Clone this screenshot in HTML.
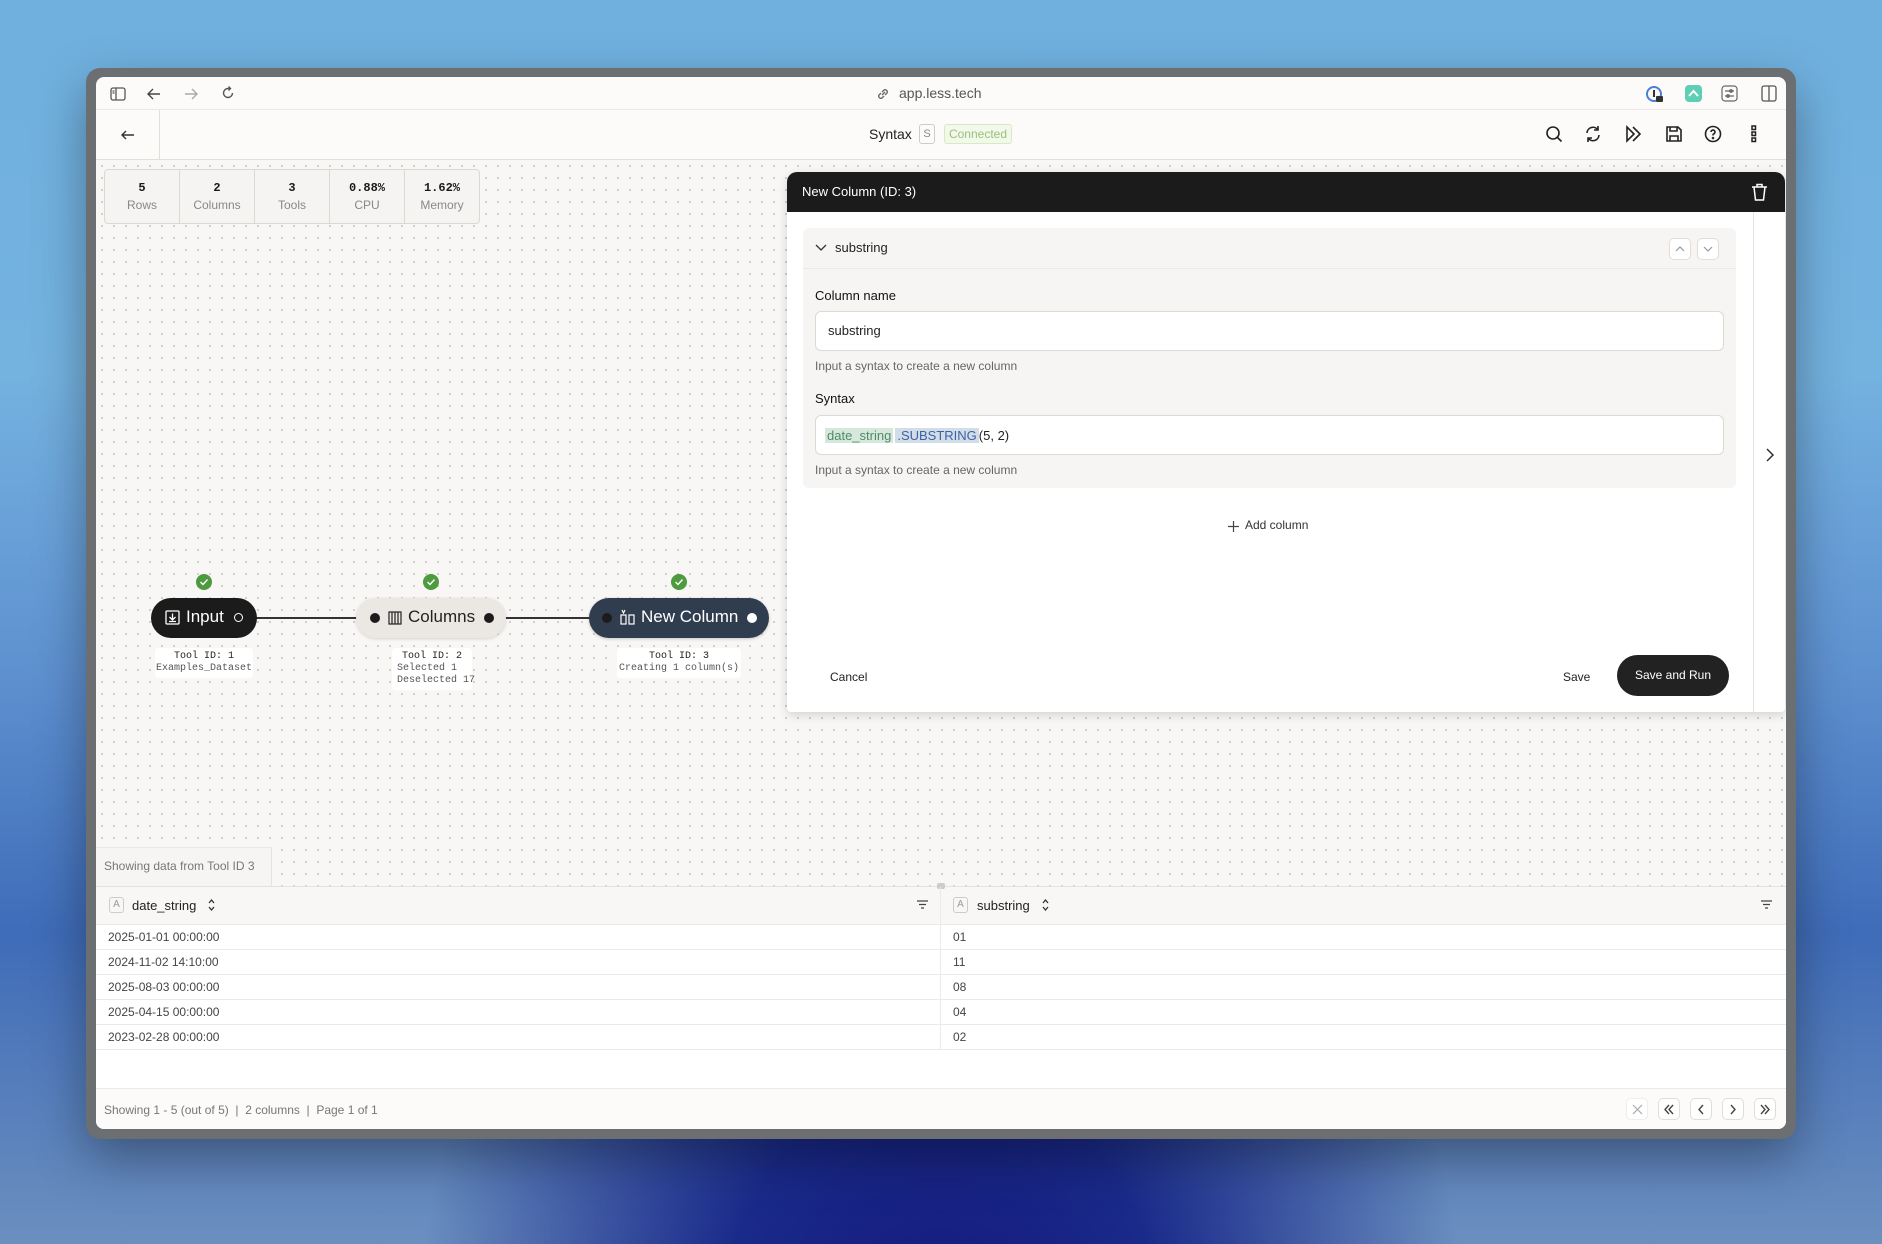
<!DOCTYPE html>
<html><head><meta charset="utf-8"><style>
*{box-sizing:border-box;margin:0;padding:0}
body{width:1882px;height:1244px;overflow:hidden;position:relative;font-family:"Liberation Sans",sans-serif;color:#1a1a1a;
background:radial-gradient(ellipse at 50% 115%,#12157a 0,#1a2a8a 18%,transparent 40%),linear-gradient(180deg,#6fb0df 0,#74b2e0 30%,#5d8fcf 55%,#3f6cb8 75%,#6b8fbf 100%);}
.abs{position:absolute}
.win{left:86px;top:68px;width:1710px;height:1071px;background:#6c6f72;border-radius:14px;box-shadow:0 20px 50px rgba(0,0,0,.35)}
.inner{left:96px;top:77px;width:1690px;height:1052px;background:#fcfbf9;border-radius:8px;overflow:hidden}
.t{position:absolute;white-space:nowrap}
.canvas{left:0;top:83px;width:1690px;height:726px;background-color:#f8f7f5;background-image:radial-gradient(#cfccc7 1px,transparent 1.2px);background-size:12px 12px}
svg{position:absolute}
.mono{font-family:"Liberation Mono",monospace}
.ibtn{position:absolute;width:22px;height:22px;border:1px solid #e2ddd6;border-radius:5px;background:#fff}
</style></head><body>
<div class="abs win"></div>
<div class="abs inner">
 <div class="abs" style="left:0;top:0;width:1690px;height:33px;border-bottom:1px solid #ebe8e4"></div>
 <svg style="left:14px;top:10px" width="16" height="14" viewBox="0 0 16 14" fill="none" stroke="#555" stroke-width="1.3"><rect x="1" y="1" width="14" height="12" rx="2"/><path d="M6 1v12M2.5 4h2M2.5 6h2"/></svg>
 <svg style="left:50px;top:10px" width="16" height="14" viewBox="0 0 16 14" fill="none" stroke="#444" stroke-width="1.4"><path d="M14 7H2M7 2L2 7l5 5"/></svg>
 <svg style="left:87px;top:10px" width="16" height="14" viewBox="0 0 16 14" fill="none" stroke="#aaa" stroke-width="1.4"><path d="M2 7h12M9 2l5 5-5 5"/></svg>
 <svg style="left:124px;top:8px" width="16" height="16" viewBox="0 0 16 16" fill="none" stroke="#555" stroke-width="1.4"><path d="M12.5 8A4.5 4.5 0 1 1 8 3.5h2M8.5 1.5l2 2-2 2"/></svg>
 <svg style="left:780px;top:10px" width="14" height="14" viewBox="0 0 14 14" fill="none" stroke="#666" stroke-width="1.3"><path d="M6 8l3-3M5 6l-2 2a2.2 2.2 0 0 0 3 3l2-2M9 8l2-2a2.2 2.2 0 0 0-3-3L6 5"/></svg>
 <div class="t" style="left:803px;top:8px;font-size:14px;color:#555">app.less.tech</div>
 <svg style="left:1550px;top:9px" width="18" height="18" viewBox="0 0 18 18"><circle cx="8" cy="8" r="7" fill="none" stroke="#4a7fd6" stroke-width="2"/><rect x="7" y="4" width="2" height="7" fill="#333"/><rect x="10" y="10" width="7" height="6" rx="1" fill="#333"/></svg>
 <div class="abs" style="left:1589px;top:8px;width:17px;height:17px;background:#5ecfb5;border-radius:4px"></div>
 <svg style="left:1592px;top:11px" width="11" height="10" viewBox="0 0 11 10" fill="none" stroke="#fff" stroke-width="2"><path d="M1 8l4.5-5L10 8"/></svg>
 <svg style="left:1625px;top:8px" width="17" height="17" viewBox="0 0 17 17" fill="none" stroke="#666" stroke-width="1.2"><rect x="1" y="1" width="15" height="15" rx="3"/><path d="M4 6h9M4 11h9"/><circle cx="10" cy="6" r="1.3"/><circle cx="7" cy="11" r="1.3"/></svg>
 <svg style="left:1665px;top:8px" width="16" height="17" viewBox="0 0 16 17" fill="none" stroke="#555" stroke-width="1.3"><rect x="1" y="1" width="14" height="15" rx="2"/><path d="M8 1v15"/></svg>
 <div class="abs" style="left:0;top:33px;width:1690px;height:50px;border-bottom:1px solid #e2ded8"></div>
 <div class="abs" style="left:63px;top:33px;width:1px;height:50px;background:#e2ded8"></div>
 <svg style="left:24px;top:52px" width="16" height="12" viewBox="0 0 16 12" fill="none" stroke="#333" stroke-width="1.4"><path d="M14 6H2M6 2L2 6l4 4"/></svg>
 <div class="t" style="left:773px;top:49px;font-size:14px;color:#222">Syntax</div>
 <div class="abs" style="left:823px;top:47px;width:16px;height:20px;border:1px solid #ccc;border-radius:3px;font-size:11px;color:#888;text-align:center;line-height:18px">S</div>
 <div class="abs" style="left:848px;top:47px;width:68px;height:20px;border:1px solid #d7ebc3;background:#f2f9ea;border-radius:3px;font-size:12px;color:#9ac07a;text-align:center;line-height:18px">Connected</div>
 <svg style="left:1449px;top:48px" width="18" height="18" viewBox="0 0 18 18" fill="none" stroke="#222" stroke-width="1.6"><circle cx="8" cy="8" r="6"/><path d="M12.5 12.5l4 4"/></svg>
 <svg style="left:1488px;top:48px" width="18" height="18" viewBox="0 0 18 18" fill="none" stroke="#222" stroke-width="1.6"><path d="M3 8a6 6 0 0 1 11-3M15 10a6 6 0 0 1-11 3M14 1v4h-4M4 17v-4h4"/></svg>
 <svg style="left:1529px;top:48px" width="18" height="18" viewBox="0 0 18 18" fill="none" stroke="#222" stroke-width="1.6"><path d="M2 2l7 7-7 7zM8 2l7 7-7 7"/></svg>
 <svg style="left:1569px;top:48px" width="18" height="18" viewBox="0 0 18 18" fill="none" stroke="#222" stroke-width="1.6"><path d="M2 2h11l3 3v11H2zM5 2v4h7V2M5 16v-5h8v5"/></svg>
 <svg style="left:1608px;top:48px" width="18" height="18" viewBox="0 0 18 18" fill="none" stroke="#222" stroke-width="1.6"><circle cx="9" cy="9" r="7.5"/><path d="M7 7a2 2 0 1 1 2.5 2c-.5.2-.5.8-.5 1.5"/><circle cx="9" cy="13" r=".5"/></svg>
 <svg style="left:1655px;top:48px" width="6" height="18" viewBox="0 0 6 18" fill="none" stroke="#222" stroke-width="1.5"><rect x="1" y="1" width="3.5" height="3.5"/><rect x="1" y="7" width="3.5" height="3.5"/><rect x="1" y="13" width="3.5" height="3.5"/></svg>
 <div class="abs canvas"></div>
 <div class="abs" style="left:8px;top:92px;width:376px;height:55px;border:1px solid #ddd8d1;border-radius:4px;background:#f6f4f2;display:flex">
  <div style="flex:1;text-align:center;border-right:1px solid #ddd8d1;padding-top:11px"><div class="mono" style="font-size:12px;font-weight:bold">5</div><div style="font-size:12px;color:#888;margin-top:3px">Rows</div></div>
  <div style="flex:1;text-align:center;border-right:1px solid #ddd8d1;padding-top:11px"><div class="mono" style="font-size:12px;font-weight:bold">2</div><div style="font-size:12px;color:#888;margin-top:3px">Columns</div></div>
  <div style="flex:1;text-align:center;border-right:1px solid #ddd8d1;padding-top:11px"><div class="mono" style="font-size:12px;font-weight:bold">3</div><div style="font-size:12px;color:#888;margin-top:3px">Tools</div></div>
  <div style="flex:1;text-align:center;border-right:1px solid #ddd8d1;padding-top:11px"><div class="mono" style="font-size:12px;font-weight:bold">0.88%</div><div style="font-size:12px;color:#888;margin-top:3px">CPU</div></div>
  <div style="flex:1;text-align:center;padding-top:11px"><div class="mono" style="font-size:12px;font-weight:bold">1.62%</div><div style="font-size:12px;color:#888;margin-top:3px">Memory</div></div>
 </div>
 <div class="abs" style="left:140px;top:540px;width:370px;height:2px;background:#333"></div>
 <svg style="left:100px;top:497px" width="16" height="16" viewBox="0 0 16 16"><circle cx="8" cy="8" r="8" fill="#4e9a3f"/><path d="M4.5 8l2.5 2.5 4.5-5" stroke="#fff" stroke-width="1.4" fill="none"/></svg>
 <svg style="left:327px;top:497px" width="16" height="16" viewBox="0 0 16 16"><circle cx="8" cy="8" r="8" fill="#4e9a3f"/><path d="M4.5 8l2.5 2.5 4.5-5" stroke="#fff" stroke-width="1.4" fill="none"/></svg>
 <svg style="left:575px;top:497px" width="16" height="16" viewBox="0 0 16 16"><circle cx="8" cy="8" r="8" fill="#4e9a3f"/><path d="M4.5 8l2.5 2.5 4.5-5" stroke="#fff" stroke-width="1.4" fill="none"/></svg>
 <div class="abs" style="left:55px;top:521px;width:106px;height:40px;background:#1b1b1b;border-radius:20px"></div>
 <svg style="left:69px;top:533px" width="15" height="15" viewBox="0 0 15 15" fill="none" stroke="#fff" stroke-width="1.3"><rect x="1" y="1" width="13" height="13" rx="1"/><path d="M7.5 3.5v6M4.5 7l3 3 3-3M4 11.5h7"/></svg>
 <div class="t" style="left:90px;top:530px;font-size:17px;color:#fff">Input</div>
 <div class="abs" style="left:138px;top:536px;width:9px;height:9px;border:1.3px solid #fff;border-radius:50%"></div>
 <div class="abs" style="left:260px;top:521px;width:150px;height:40px;background:#ebe8e3;border-radius:20px;box-shadow:0 1px 3px rgba(0,0,0,.15)"></div>
 <div class="abs" style="left:274px;top:536px;width:10px;height:10px;background:#1b1b1b;border-radius:50%"></div>
 <svg style="left:292px;top:534px" width="14" height="14" viewBox="0 0 14 14" fill="none" stroke="#222" stroke-width="1.2"><rect x="1" y="1" width="12" height="12"/><path d="M4 1v12M7 1v12M10 1v12"/></svg>
 <div class="t" style="left:312px;top:530px;font-size:17px;color:#222">Columns</div>
 <div class="abs" style="left:388px;top:536px;width:10px;height:10px;background:#1b1b1b;border-radius:50%"></div>
 <div class="abs" style="left:493px;top:521px;width:180px;height:40px;background:#303d4e;border-radius:20px;box-shadow:0 1px 3px rgba(0,0,0,.2)"></div>
 <div class="abs" style="left:506px;top:536px;width:10px;height:10px;background:#1b1b1b;border-radius:50%"></div>
 <svg style="left:524px;top:532px" width="15" height="16" viewBox="0 0 15 16" fill="none" stroke="#fff" stroke-width="1.2"><rect x="1" y="6" width="5" height="9"/><rect x="9" y="6" width="5" height="9"/><path d="M2 1l1.5 3L5 1"/></svg>
 <div class="t" style="left:545px;top:530px;font-size:17px;color:#fff">New Column</div>
 <div class="abs" style="left:651px;top:536px;width:10px;height:10px;background:#fff;border-radius:50%"></div>
 <div class="abs mono" style="left:59px;top:571px;width:98px;height:30px;background:#fff;border-radius:3px;font-size:10px;text-align:center;line-height:12px;padding-top:3px;color:#222;white-space:nowrap">Tool ID: 1<br><span style="color:#555">Examples_Dataset</span></div>
 <div class="abs mono" style="left:296px;top:571px;width:80px;height:42px;background:#fff;border-radius:3px;font-size:10px;line-height:12px;padding:3px 0 0 5px;color:#555;white-space:nowrap"><div style="color:#222;text-align:center;padding-right:5px">Tool ID: 2</div>Selected 1<br>Deselected 17</div>
 <div class="abs mono" style="left:521px;top:571px;width:124px;height:30px;background:#fff;border-radius:3px;font-size:10px;text-align:center;line-height:12px;padding-top:3px;color:#222;white-space:nowrap">Tool ID: 3<br><span style="color:#555">Creating 1 column(s)</span></div>
 <div class="abs" style="left:691px;top:95px;width:998px;height:540px;background:#fff;border-radius:10px 10px 4px 4px;box-shadow:0 3px 10px rgba(0,0,0,.15);overflow:hidden">
  <div class="abs" style="left:0;top:0;width:998px;height:40px;background:#1b1b1b"></div>
  <div class="t" style="left:15px;top:12px;font-size:13px;color:#fff">New Column (ID: 3)</div>
  <svg style="left:964px;top:11px" width="17" height="18" viewBox="0 0 17 18" fill="none" stroke="#fff" stroke-width="1.5"><path d="M1 4h15M6 4V1.5h5V4M3 4l1.5 13h8L14 4"/></svg>
  <div class="abs" style="left:966px;top:40px;width:1px;height:500px;background:#e6e2dc"></div>
  <svg style="left:978px;top:276px" width="10" height="14" viewBox="0 0 10 14" fill="none" stroke="#333" stroke-width="1.5"><path d="M2 1l6 6-6 6"/></svg>
  <div class="abs" style="left:16px;top:56px;width:933px;height:260px;background:#f6f5f3;border-radius:6px"></div>
  <div class="abs" style="left:16px;top:96px;width:933px;height:1px;background:#eceae6"></div>
  <svg style="left:28px;top:72px" width="12" height="8" viewBox="0 0 12 8" fill="none" stroke="#333" stroke-width="1.3"><path d="M1 1l5 5 5-5"/></svg>
  <div class="t" style="left:48px;top:68px;font-size:13px;color:#222">substring</div>
  <div class="ibtn" style="left:882px;top:66px"></div><div class="ibtn" style="left:910px;top:66px"></div>
  <svg style="left:888px;top:74px" width="10" height="6" viewBox="0 0 10 6" fill="none" stroke="#999" stroke-width="1.2"><path d="M1 5l4-4 4 4"/></svg>
  <svg style="left:916px;top:74px" width="10" height="6" viewBox="0 0 10 6" fill="none" stroke="#999" stroke-width="1.2"><path d="M1 1l4 4 4-4"/></svg>
  <div class="t" style="left:28px;top:116px;font-size:13px;color:#111">Column name</div>
  <div class="abs" style="left:28px;top:139px;width:909px;height:40px;background:#fff;border:1px solid #ddd9d3;border-radius:6px"></div>
  <div class="t" style="left:41px;top:151px;font-size:13px;color:#222">substring</div>
  <div class="t" style="left:28px;top:187px;font-size:12px;color:#666">Input a syntax to create a new column</div>
  <div class="t" style="left:28px;top:219px;font-size:13px;color:#111">Syntax</div>
  <div class="abs" style="left:28px;top:243px;width:909px;height:40px;background:#fff;border:1px solid #ddd9d3;border-radius:6px"></div>
  <div class="t" style="left:38px;top:255px;font-size:13px;line-height:17px"><span style="background:#d6e8dc;color:#4f8a66;padding:0 2px">date_string</span><span style="background:#d3dde8;color:#3a63a8;padding:0 2px;margin-left:2px">.SUBSTRING</span><span style="color:#222">(5, 2)</span></div>
  <div class="t" style="left:28px;top:291px;font-size:12px;color:#666">Input a syntax to create a new column</div>
  <svg style="left:441px;top:349px" width="11" height="11" viewBox="0 0 11 11" stroke="#444" stroke-width="1.2"><path d="M5.5 0v11M0 5.5h11"/></svg>
  <div class="t" style="left:458px;top:346px;font-size:12px;color:#333">Add column</div>
  <div class="t" style="left:43px;top:498px;font-size:12px;color:#222">Cancel</div>
  <div class="t" style="left:776px;top:498px;font-size:12px;color:#222">Save</div>
  <div class="abs" style="left:830px;top:483px;width:112px;height:41px;background:#222;border-radius:21px;color:#fff;font-size:12px;text-align:center;line-height:41px">Save and Run</div>
 </div>
 <div class="abs" style="left:0;top:770px;width:176px;height:39px;background:#f6f5f3;border-right:1px solid #e6e2dc;border-top:1px solid #eceae6"></div>
 <div class="t" style="left:8px;top:782px;font-size:12px;color:#777">Showing data from Tool ID 3</div>
 <div class="abs" style="left:0;top:809px;width:1690px;height:243px;background:#fff;border-top:1px solid #e6e2dc"></div>
 <div class="abs" style="left:0;top:810px;width:1690px;height:38px;background:#f8f7f5;border-bottom:1px solid #eceae6"></div>
 <div class="abs" style="left:841px;top:806px;width:8px;height:6px;background:#ccc;border-radius:2px"></div>
 <div class="abs" style="left:844px;top:810px;width:1px;height:163px;background:#eceae6"></div>
 <div class="abs" style="left:13px;top:820px;width:15px;height:16px;border:1px solid #ccc;border-radius:3px;font-size:10px;color:#999;text-align:center;line-height:14px">A</div>
 <div class="t" style="left:36px;top:821px;font-size:13px;color:#222">date_string</div>
 <svg style="left:112px;top:822px" width="7" height="12" viewBox="0 0 7 12" fill="none" stroke="#333" stroke-width="1.3"><path d="M1 4l2.5-3L6 4M1 8l2.5 3L6 8"/></svg>
 <svg style="left:821px;top:823px" width="11" height="9" viewBox="0 0 11 9" stroke="#444" stroke-width="1.3"><path d="M0 1h11M2 4.5h7M4 8h3"/></svg>
 <div class="abs" style="left:857px;top:820px;width:15px;height:16px;border:1px solid #ccc;border-radius:3px;font-size:10px;color:#999;text-align:center;line-height:14px">A</div>
 <div class="t" style="left:881px;top:821px;font-size:13px;color:#222">substring</div>
 <svg style="left:946px;top:822px" width="7" height="12" viewBox="0 0 7 12" fill="none" stroke="#333" stroke-width="1.3"><path d="M1 4l2.5-3L6 4M1 8l2.5 3L6 8"/></svg>
 <svg style="left:1665px;top:823px" width="11" height="9" viewBox="0 0 11 9" stroke="#444" stroke-width="1.3"><path d="M0 1h11M2 4.5h7M4 8h3"/></svg>
 <div class="abs" style="left:0;top:848px;width:1690px;font-size:12px;color:#444">
  <div style="height:25px;border-bottom:1px solid #eceae6;position:relative"><span class="t" style="left:12px;top:5px">2025-01-01 00:00:00</span><span class="t" style="left:857px;top:5px">01</span></div>
  <div style="height:25px;border-bottom:1px solid #eceae6;position:relative"><span class="t" style="left:12px;top:5px">2024-11-02 14:10:00</span><span class="t" style="left:857px;top:5px">11</span></div>
  <div style="height:25px;border-bottom:1px solid #eceae6;position:relative"><span class="t" style="left:12px;top:5px">2025-08-03 00:00:00</span><span class="t" style="left:857px;top:5px">08</span></div>
  <div style="height:25px;border-bottom:1px solid #eceae6;position:relative"><span class="t" style="left:12px;top:5px">2025-04-15 00:00:00</span><span class="t" style="left:857px;top:5px">04</span></div>
  <div style="height:25px;border-bottom:1px solid #eceae6;position:relative"><span class="t" style="left:12px;top:5px">2023-02-28 00:00:00</span><span class="t" style="left:857px;top:5px">02</span></div>
 </div>
 <div class="abs" style="left:0;top:1011px;width:1690px;height:41px;background:#fcfbf9;border-top:1px solid #eceae6"></div>
 <div class="t" style="left:8px;top:1026px;font-size:12px;color:#777">Showing 1 - 5 (out of 5) &nbsp;| &nbsp;2 columns &nbsp;| &nbsp;Page 1 of 1</div>
 <div class="ibtn" style="left:1530px;top:1021px;border-color:#eee"></div>
 <div class="ibtn" style="left:1562px;top:1021px"></div>
 <div class="ibtn" style="left:1594px;top:1021px"></div>
 <div class="ibtn" style="left:1626px;top:1021px"></div>
 <div class="ibtn" style="left:1658px;top:1021px"></div>
 <svg style="left:1536px;top:1027px" width="11" height="11" viewBox="0 0 11 11" stroke="#aaa" stroke-width="1.2"><path d="M1 1l9 9M10 1l-9 9"/></svg>
 <svg style="left:1567px;top:1027px" width="12" height="11" viewBox="0 0 12 11" fill="none" stroke="#444" stroke-width="1.4"><path d="M6 1L2 5.5 6 10M10 1L6 5.5 10 10"/></svg>
 <svg style="left:1601px;top:1027px" width="8" height="11" viewBox="0 0 8 11" fill="none" stroke="#444" stroke-width="1.4"><path d="M6 1L2 5.5 6 10"/></svg>
 <svg style="left:1633px;top:1027px" width="8" height="11" viewBox="0 0 8 11" fill="none" stroke="#444" stroke-width="1.4"><path d="M2 1l4 4.5L2 10"/></svg>
 <svg style="left:1663px;top:1027px" width="12" height="11" viewBox="0 0 12 11" fill="none" stroke="#444" stroke-width="1.4"><path d="M2 1l4 4.5L2 10M6 1l4 4.5L6 10"/></svg>
</div>
</body></html>
